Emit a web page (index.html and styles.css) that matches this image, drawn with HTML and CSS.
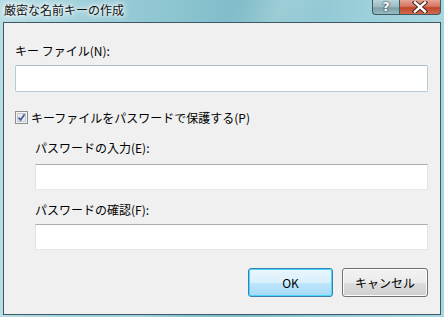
FILE: index.html
```html
<!DOCTYPE html>
<html lang="ja">
<head>
    <meta charset="UTF-8">
    <title>厳密な名前キーの作成</title>
    <link rel="stylesheet" href="styles.css">
</head>
<body>
    <div class="window">
        <div class="titlebar">
            <span class="title">厳密な名前キーの作成</span>
            <div class="caption-buttons">
                <div class="cap help">?</div>
                <div class="cap close">
                    <svg width="16" height="12" viewBox="0 0 16 12">
                        <path d="M3 1.5 L13 10.5 M13 1.5 L3 10.5" stroke="#4a2620" stroke-width="4.4" stroke-linecap="square"/>
                        <path d="M3 1.5 L13 10.5 M13 1.5 L3 10.5" stroke="#ffffff" stroke-width="2.4" stroke-linecap="square"/>
                    </svg>
                </div>
            </div>
        </div>
        <div class="client">
            <div class="label first">キー ファイル(N):</div>
            <div class="textbox tall"></div>

            <div class="check-row">
                <span class="checkbox">
                    <svg width="13" height="13" viewBox="0 0 13 13">
                        <rect x="0.5" y="0.5" width="12" height="12" fill="#f4f4f4" stroke="#8e8f8f"/>
                        <rect x="2.5" y="2.5" width="8" height="8" fill="#e8edf3" stroke="#c3cad3"/>
                        <path d="M3.5 6.5 L5.6 9 L9.6 3.3" fill="none" stroke="#4a5f97" stroke-width="1.8"/>
                    </svg>
                </span>
                <span>キーファイルをパスワードで保護する(P)</span>
            </div>

            <div class="group">
                <div class="label pw1">パスワードの入力(E):</div>
                <div class="textbox"></div>
                <div class="label pw2">パスワードの確認(F):</div>
                <div class="textbox last"></div>
            </div>

            <div class="buttons">
                <button class="btn default">OK</button>
                <button class="btn">キャンセル</button>
            </div>
        </div>
    </div>
</body>
</html>
```

FILE: styles.css
```css
body {
    margin: 0;
    font-family: "Noto Sans CJK JP", "Noto Sans", sans-serif;
    font-size: 12px;
    color: #000;
}
.window {
    width: 444px;
    height: 317px;
    box-sizing: border-box;
    padding: 0 3px 2px 3px;
    display: flex;
    flex-direction: column;
    background:
        linear-gradient(115deg, rgba(255,255,255,0) 40%, rgba(255,255,255,0.18) 48%, rgba(255,255,255,0) 56%),
        linear-gradient(90deg, #b7dde5 0%, #98ccd7 25%, #7fbcc8 55%, #9acfd9 80%, #a9d7e0 100%);
}
.titlebar {
    height: 22px;
    display: flex;
    align-items: flex-start;
    justify-content: space-between;
}
.title {
    margin-left: 1px;
    margin-top: 1px;
    line-height: 18px;
    color: #111;
    text-shadow: 0 0 6px #fff, 0 0 10px #fff, 0 0 3px #fff;
}
.cap {
    height: 15px;
    box-sizing: border-box;
    border: 1px solid #3f5a63;
    border-top: none;
    display: flex;
    align-items: center;
    justify-content: center;
}
.caption-buttons {
    display: flex;
}
.help {
    width: 27px;
    border-radius: 0 0 0 4px;
    border-right: none;
    background: linear-gradient(#b9d3da 0%, #9dbac2 50%, #7f9fa8 55%, #98bcc4 100%);
    color: #fff;
    font-family: "DejaVu Sans", sans-serif;
    font-weight: bold;
    font-size: 13px;
    line-height: 14px;
    text-shadow: 0 0 2px #2e4a52, 0 0 1px #2e4a52, 0 0 1px #2e4a52;
}
.close {
    width: 42px;
    border-radius: 0 0 4px 0;
    background: linear-gradient(#e5a394 0%, #d57762 45%, #c0462c 55%, #d06a4c 100%);
}
.client {
    flex: 1;
    background: #f0f0f0;
    border: 1px solid #3d5864;
    padding: 0 12px 0 11px;
}
.label {
    line-height: 16px;
    height: 16px;
}
.label.first {
    margin-top: 20px;
    margin-bottom: 6px;
}
.textbox {
    height: 26px;
    background: #fff;
    border: 1px solid #e2e3ea;
    border-top-color: #abadb3;
    border-bottom-color: #e3e9ef;
    box-sizing: border-box;
}
.textbox.tall {
    height: 27px;
    border-color: #b5cbd8;
    border-top-color: #a8bccb;
    border-radius: 2px;
}
.check-row {
    margin-top: 17px;
    height: 16px;
    display: flex;
    align-items: center;
    gap: 3px;
}
.checkbox {
    width: 13px;
    height: 13px;
    display: flex;
}
.group {
    padding-left: 20px;
}
.label.pw1 {
    margin-top: 15px;
    margin-bottom: 8px;
}
.label.pw2 {
    margin-top: 12px;
    margin-bottom: 6px;
}
.buttons {
    margin-top: 18px;
    display: flex;
    justify-content: flex-end;
    gap: 9px;
}
.btn {
    width: 86px;
    height: 29px;
    font-family: "Noto Sans CJK JP", "Noto Sans", sans-serif;
    font-size: 12px;
    color: #000;
    border: 1px solid #707070;
    border-radius: 3px;
    background: linear-gradient(#f2f2f2 0%, #ebebeb 50%, #dddddd 51%, #cfcfcf 100%);
    box-shadow: inset 0 0 0 1px #fcfcfc;
    padding: 0;
}
.btn.default {
    width: 85px;
    border-color: #3c7fb1;
    background: linear-gradient(#eaf6fd 0%, #d9f0fc 50%, #bee6fd 51%, #a7d9f5 100%);
    box-shadow: inset 0 0 0 1px #48d8fb;
}
```
